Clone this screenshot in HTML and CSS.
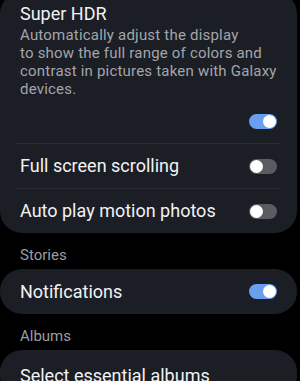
FILE: index.html
```html
<!DOCTYPE html>
<html lang="en">
<head>
  <meta charset="UTF-8">
  <meta name="viewport" content="width=device-width, initial-scale=1.0">
  <title>Gallery settings</title>
  <link rel="stylesheet" href="styles.css">
</head>
<body>
  <div class="settings">
    <div class="card card-first">
      <div class="item item-hdr">
        <div class="item-title">Super HDR</div>
        <div class="item-desc">Automatically adjust the display<br>to show the full range of colors and<br>contrast in pictures taken with Galaxy<br>devices.</div>
        <div class="toggle-line"><span class="switch on"></span></div>
      </div>
      <div class="item item-row">
        <div class="item-title">Full screen scrolling</div>
        <span class="switch"></span>
      </div>
      <div class="item item-row">
        <div class="item-title">Auto play motion photos</div>
        <span class="switch"></span>
      </div>
    </div>

    <div class="section">Stories</div>
    <div class="card">
      <div class="item item-row">
        <div class="item-title">Notifications</div>
        <span class="switch on"></span>
      </div>
    </div>

    <div class="section">Albums</div>
    <div class="card">
      <div class="item item-row item-last">
        <div class="item-title">Select essential albums</div>
      </div>
    </div>
  </div>
</body>
</html>
```

FILE: styles.css
```css
body {
  margin: 0;
  background: #000;
  font-family: Roboto, "Noto Sans", sans-serif;
  color: #f2f2f4;
  overflow: hidden;
}

.settings {
  width: 297px;
}

.card {
  background: #1b1e25;
  border-radius: 22px;
}

.card-first {
  margin-top: -8px;
}

.item {
  margin: 0 16px;
  border-top: 1px solid #2b2e35;
}

.item:first-child {
  border-top: none;
}

.item-hdr {
  padding: 11px 4px 14px;
}

.item-row {
  display: flex;
  align-items: center;
  justify-content: space-between;
  height: 44px;
  padding: 0 4px;
}

.card .item-row:first-child {
  height: 45px;
}

.item-last {
  padding-top: 3px;
}

.item-title {
  font-size: 18px;
  line-height: 22px;
}

.item-desc {
  font-size: 15px;
  line-height: 18px;
  letter-spacing: 0.2px;
  color: #a3a5ab;
  margin-top: 1px;
}

.toggle-line {
  display: flex;
  justify-content: flex-end;
  margin-top: 16px;
}

.switch {
  position: relative;
  display: inline-block;
  width: 28px;
  height: 15px;
  border-radius: 8px;
  background: #5b5c61;
  flex-shrink: 0;
}

.switch::after {
  content: "";
  position: absolute;
  top: 1px;
  left: 1px;
  width: 13px;
  height: 13px;
  border-radius: 50%;
  background: #fff;
}

.switch.on {
  background: #6a9ff0;
}

.switch.on::after {
  left: 14px;
}

.section {
  font-size: 15px;
  color: #9a9ca2;
  padding: 15px 20px 6px;
  line-height: 15px;
}
```
